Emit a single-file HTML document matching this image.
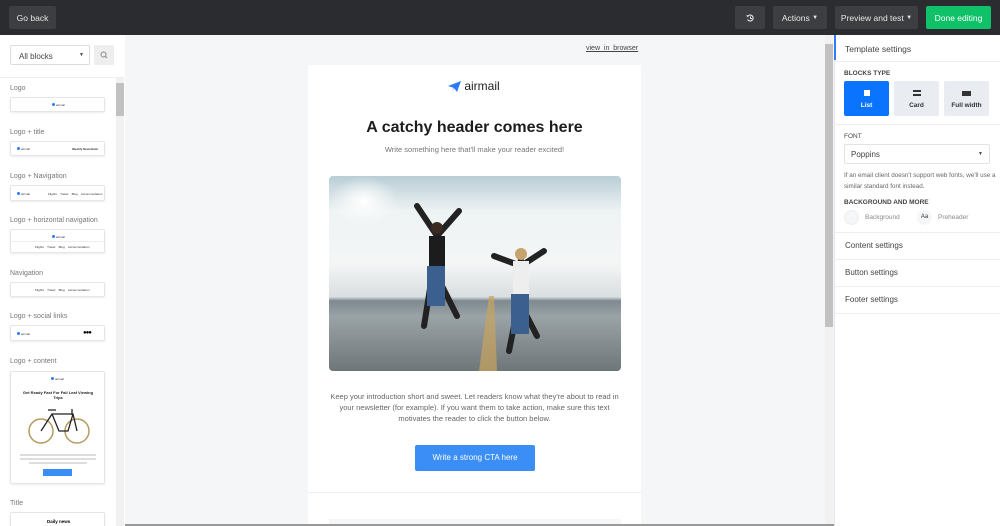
<!DOCTYPE html>
<html><head><meta charset="utf-8"><style>
*{box-sizing:border-box;margin:0;padding:0}
html,body{width:1000px;height:526px;overflow:hidden}
body{font-family:"Liberation Sans",sans-serif;background:#f5f6f8;position:relative}
.abs{position:absolute}
.top{left:0;top:0;width:1000px;height:35px;background:#2a2c30}
.btn{position:absolute;top:6px;height:23px;background:#3d3e41;color:#e6e6e6;font-size:8.5px;border-radius:2px;display:flex;align-items:center;justify-content:center}
.left{left:0;top:35px;width:125px;height:491px;background:#fff}
.lbl{position:absolute;left:10px;font-size:7px;color:#777}
.card{position:absolute;left:10px;width:95px;background:#fff;border:1px solid #e6e6e6;border-radius:2px;box-shadow:0 1px 2px rgba(0,0,0,.08)}
.dot{display:inline-block;width:3px;height:3px;background:#2e7cf6;border-radius:50%}
.tiny{font-size:3px;color:#333;position:absolute}
.right{left:834px;top:35px;width:166px;height:491px;background:#fff;border-left:1px solid #e3e6ea}
.sec{position:absolute;left:10px;font-size:8px;color:#444}
.hd{position:absolute;left:9px;font-size:6.5px;font-weight:bold;color:#444}
.bt{position:absolute;top:46px;width:45px;height:35px;border-radius:2px;background:#e9ecf0;font-size:6.5px;font-weight:bold;color:#333;text-align:center}
.hr{position:absolute;left:0;width:166px;height:1px;background:#eceef1}
</style></head><body>
<div class="abs top"></div>
<div class="btn" style="left:9px;width:47px">Go back</div>
<div class="btn" style="left:735px;width:30px"><svg width="10" height="10" viewBox="0 0 10 10"><path d="M2.5 3.5A3 3 0 1 1 2.5 6.5" stroke="#ddd" stroke-width="1.2" fill="none"/><path d="M1 2.5L3 4.5L4 2" fill="#ddd"/><path d="M5.5 3.5V5.5H7" stroke="#ddd" fill="none"/></svg></div>
<div class="btn" style="left:773px;width:54px">Actions&nbsp;<span style="font-size:6px">▼</span></div>
<div class="btn" style="left:835px;width:83px">Preview and test&nbsp;<span style="font-size:6px">▼</span></div>
<div class="btn" style="left:926px;width:65px;background:#0fc168;color:#fff">Done editing</div>

<div class="abs left">
 <div class="abs" style="left:10px;top:10px;width:80px;height:20px;border:1px solid #ddd;border-radius:2px;font-size:8px;color:#444;padding:6px 0 0 8px">All blocks<span style="position:absolute;right:5px;top:6px;font-size:5px">▼</span></div>
 <div class="abs" style="left:94px;top:10px;width:20px;height:20px;background:#eee;border-radius:2px"><svg width="20" height="20"><circle cx="9.5" cy="9.5" r="2.5" stroke="#888" fill="none"/><path d="M11.3 11.3L13 13" stroke="#888"/></svg></div>
 <div class="abs" style="left:0;top:42px;width:125px;height:1px;background:#eee"></div>
 <div class="abs" style="left:116px;top:43px;width:8px;height:448px;background:#f1f1f1"></div>
 <div class="abs" style="left:116px;top:48px;width:8px;height:33px;background:#c1c1c1"></div>
 <div class="lbl" style="top:50px">Logo</div>
 <div class="card" style="top:62px;height:15px"><span class="dot" style="position:absolute;left:41px;top:5px"></span><span class="tiny" style="left:45px;top:5px">airmail</span></div>
 <div class="lbl" style="top:94px">Logo + title</div>
 <div class="card" style="top:106px;height:15px"><span class="dot" style="position:absolute;left:6px;top:5px"></span><span class="tiny" style="left:10px;top:5px">airmail</span><span class="tiny" style="left:61px;top:5px;font-weight:bold">Weekly Newsletter</span></div>
 <div class="lbl" style="top:138px">Logo + Navigation</div>
 <div class="card" style="top:150px;height:16px"><span class="dot" style="position:absolute;left:6px;top:6px"></span><span class="tiny" style="left:10px;top:6px">airmail</span><span class="tiny" style="left:37px;top:6px">Flights &nbsp;&nbsp; Travel &nbsp;&nbsp; Blog &nbsp;&nbsp; Accommodation</span></div>
 <div class="lbl" style="top:182px">Logo + horizontal navigation</div>
 <div class="card" style="top:194px;height:24px"><span class="dot" style="position:absolute;left:41px;top:5px"></span><span class="tiny" style="left:45px;top:5px">airmail</span><div style="position:absolute;left:0;top:11px;width:93px;height:1px;background:#eee"></div><span class="tiny" style="left:24px;top:15px">Flights &nbsp;&nbsp; Travel &nbsp;&nbsp; Blog &nbsp;&nbsp; Accommodation</span></div>
 <div class="lbl" style="top:235px">Navigation</div>
 <div class="card" style="top:247px;height:15px"><span class="tiny" style="left:24px;top:5px">Flights &nbsp;&nbsp; Travel &nbsp;&nbsp; Blog &nbsp;&nbsp; Accommodation</span></div>
 <div class="lbl" style="top:278px">Logo + social links</div>
 <div class="card" style="top:290px;height:16px"><span class="dot" style="position:absolute;left:6px;top:6px"></span><span class="tiny" style="left:10px;top:6px">airmail</span><span style="position:absolute;left:72px;top:4px;font-size:6px;letter-spacing:-1px">●●●</span></div>
 <div class="lbl" style="top:323px">Logo + content</div>
 <div class="card" style="top:336px;height:113px">
  <span class="dot" style="position:absolute;left:40px;top:5px"></span><span class="tiny" style="left:44px;top:5px">airmail</span>
  <div style="position:absolute;left:8px;top:18px;width:78px;text-align:center;font-size:4px;font-weight:bold;color:#222">Get Ready Fast For Fall Leaf Viewing Trips</div>
  <svg style="position:absolute;left:17px;top:34px" width="62" height="40"><circle cx="13" cy="25" r="12" stroke="#b59a5e" stroke-width="1.5" fill="none"/><circle cx="49" cy="25" r="12" stroke="#b59a5e" stroke-width="1.5" fill="none"/><path d="M13 25L24 8H45L49 25M24 8L31 25H40L45 8M31 25L24 8M20 4h8M44 3v6" stroke="#222" stroke-width="1.3" fill="none"/></svg>
  <div style="position:absolute;left:9px;top:82px;width:76px;height:2px;background:#ddd"></div>
  <div style="position:absolute;left:9px;top:86px;width:76px;height:2px;background:#ddd"></div>
  <div style="position:absolute;left:18px;top:90px;width:58px;height:2px;background:#ddd"></div>
  <div style="position:absolute;left:32px;top:97px;width:29px;height:7px;background:#3a8ef5"></div>
 </div>
 <div class="lbl" style="top:465px">Title</div>
 <div class="card" style="top:477px;height:20px"><span style="position:absolute;left:36px;top:6px;font-size:4.5px;font-weight:bold">Daily news</span></div>
</div>

<div class="abs" style="left:586px;top:45px;font-size:7px;color:#444;text-decoration:underline">view_in_browser</div>
<div class="abs" style="left:308px;top:65px;width:333px;height:461px;background:#fff">
 <div class="abs" style="left:140px;top:14px;font-size:12px;color:#222;display:flex;align-items:center"><svg width="13" height="11" viewBox="0 0 13 11"><path d="M0 5L13 0L9 11L6 7Z" fill="#2e7cf6"/><path d="M6 7L13 0L4 10Z" fill="#1a5fd0"/></svg>&nbsp;airmail</div>
 <div class="abs" style="left:0;top:54px;width:333px;text-align:center;font-size:16px;font-weight:bold;color:#1d1d1d">A catchy header comes here</div>
 <div class="abs" style="left:0;top:80px;width:333px;text-align:center;font-size:7.5px;color:#777">Write something here that'll make your reader excited!</div>
 <div class="abs" style="left:21px;top:111px;width:292px;height:195px;border-radius:4px;overflow:hidden;background:linear-gradient(180deg,#b8cdd6 0%,#eef3f4 18%,#f4f6f6 45%,#d9dee0 62%,#7e8a90 64%,#9aa3a6 72%,#6f767a 100%)">
  <div style="position:absolute;left:0;top:0;width:70px;height:50px;background:radial-gradient(#fff,transparent 70%)"></div>
  <svg style="position:absolute;left:0;top:0" width="292" height="195"><path d="M150 195L160 120L165 120L168 195Z" fill="#c9a45e" opacity=".7"/><g stroke="#222" stroke-width="6" stroke-linecap="round" fill="none"><path d="M108 50L105 100M108 60L88 30M108 60L130 35M103 100L95 150M108 100L128 140"/><path d="M192 80L190 125M192 90L215 75M192 90L165 80M190 125L180 175M190 125L208 160"/></g><path d="M100 60h16v35h-16z" fill="#1c1c1c"/><path d="M184 85h16v35h-16z" fill="#eee"/><path d="M98 90h18v40h-18zM182 118h18v40h-18z" fill="#3b5f8e"/><circle cx="108" cy="52" r="6" fill="#3a2a20"/><circle cx="192" cy="78" r="6" fill="#c7a46d"/></svg>
 </div>
 <div class="abs" style="left:20px;top:326px;width:293px;text-align:center;font-size:7.5px;line-height:11px;color:#666">Keep your introduction short and sweet. Let readers know what they're about to read in your newsletter (for example). If you want them to take action, make sure this text motivates the reader to click the button below.</div>
 <div class="abs" style="left:107px;top:380px;width:120px;height:26px;background:#3a8ef5;border-radius:2px;color:#fff;font-size:8px;text-align:center;line-height:26px">Write a strong CTA here</div>
 <div class="abs" style="left:0;top:427px;width:333px;height:1px;background:#eef0f2"></div>
 <div class="abs" style="left:21px;top:454px;width:292px;height:7px;background:#f5f6f7"></div>
</div>
<div class="abs" style="left:825px;top:35px;width:8px;height:491px;background:#f1f1f1"></div>
<div class="abs" style="left:825px;top:44px;width:8px;height:283px;background:#c1c1c1"></div>
<div class="abs" style="left:125px;top:524px;width:710px;height:2px;background:#999"></div>

<div class="abs right">
 <div class="sec" style="top:9px;font-size:8.5px">Template settings</div>
 <div class="hr" style="top:26px"></div>
 <div class="hd" style="top:35px">BLOCKS TYPE</div>
 <div class="bt" style="left:9px;background:#0a74ff;color:#fff"><div style="width:6px;height:6px;background:#fff;margin:9px auto 6px"></div>List</div>
 <div class="bt" style="left:59px"><div style="width:8px;height:6px;border-top:2px solid #333;border-bottom:2px solid #333;margin:9px auto 6px"></div>Card</div>
 <div class="bt" style="left:109px"><div style="width:9px;height:5px;background:#333;margin:10px auto 6px"></div>Full width</div>
 <div class="hr" style="top:89px"></div>
 <div class="hd" style="top:98px;font-weight:normal">FONT</div>
 <div class="abs" style="left:9px;top:109px;width:146px;height:20px;border:1px solid #e3e3e3;border-radius:2px;font-size:8px;color:#444;padding:5px 0 0 6px">Poppins<span style="position:absolute;right:6px;top:6px;font-size:5px">▼</span></div>
 <div class="abs" style="left:9px;top:136px;font-size:6.3px;color:#666;line-height:10.5px;width:155px">If an email client doesn't support web fonts, we'll use a similar standard font instead.</div>
 <div class="hd" style="top:164px">BACKGROUND AND MORE</div>
 <div class="abs" style="left:9px;top:175px;width:15px;height:15px;border-radius:50%;background:#f5f6f8;border:1px solid #eee"></div>
 <div class="abs" style="left:30px;top:179px;font-size:6.5px;color:#888">Background</div>
 <div class="abs" style="left:82px;top:175px;width:15px;height:15px;border-radius:50%;background:#f5f6f8;font-size:6px;text-align:center;line-height:15px;color:#333">Aa</div>
 <div class="abs" style="left:103px;top:179px;font-size:6.5px;color:#888">Preheader</div>
 <div class="hr" style="top:197px"></div>
 <div class="sec" style="top:206px">Content settings</div>
 <div class="hr" style="top:224px"></div>
 <div class="sec" style="top:233px">Button settings</div>
 <div class="hr" style="top:251px"></div>
 <div class="sec" style="top:260px">Footer settings</div>
 <div class="hr" style="top:278px"></div>
</div>
<div class="abs" style="left:834px;top:35px;width:2px;height:25px;background:#2e7cf6"></div>
</body></html>
